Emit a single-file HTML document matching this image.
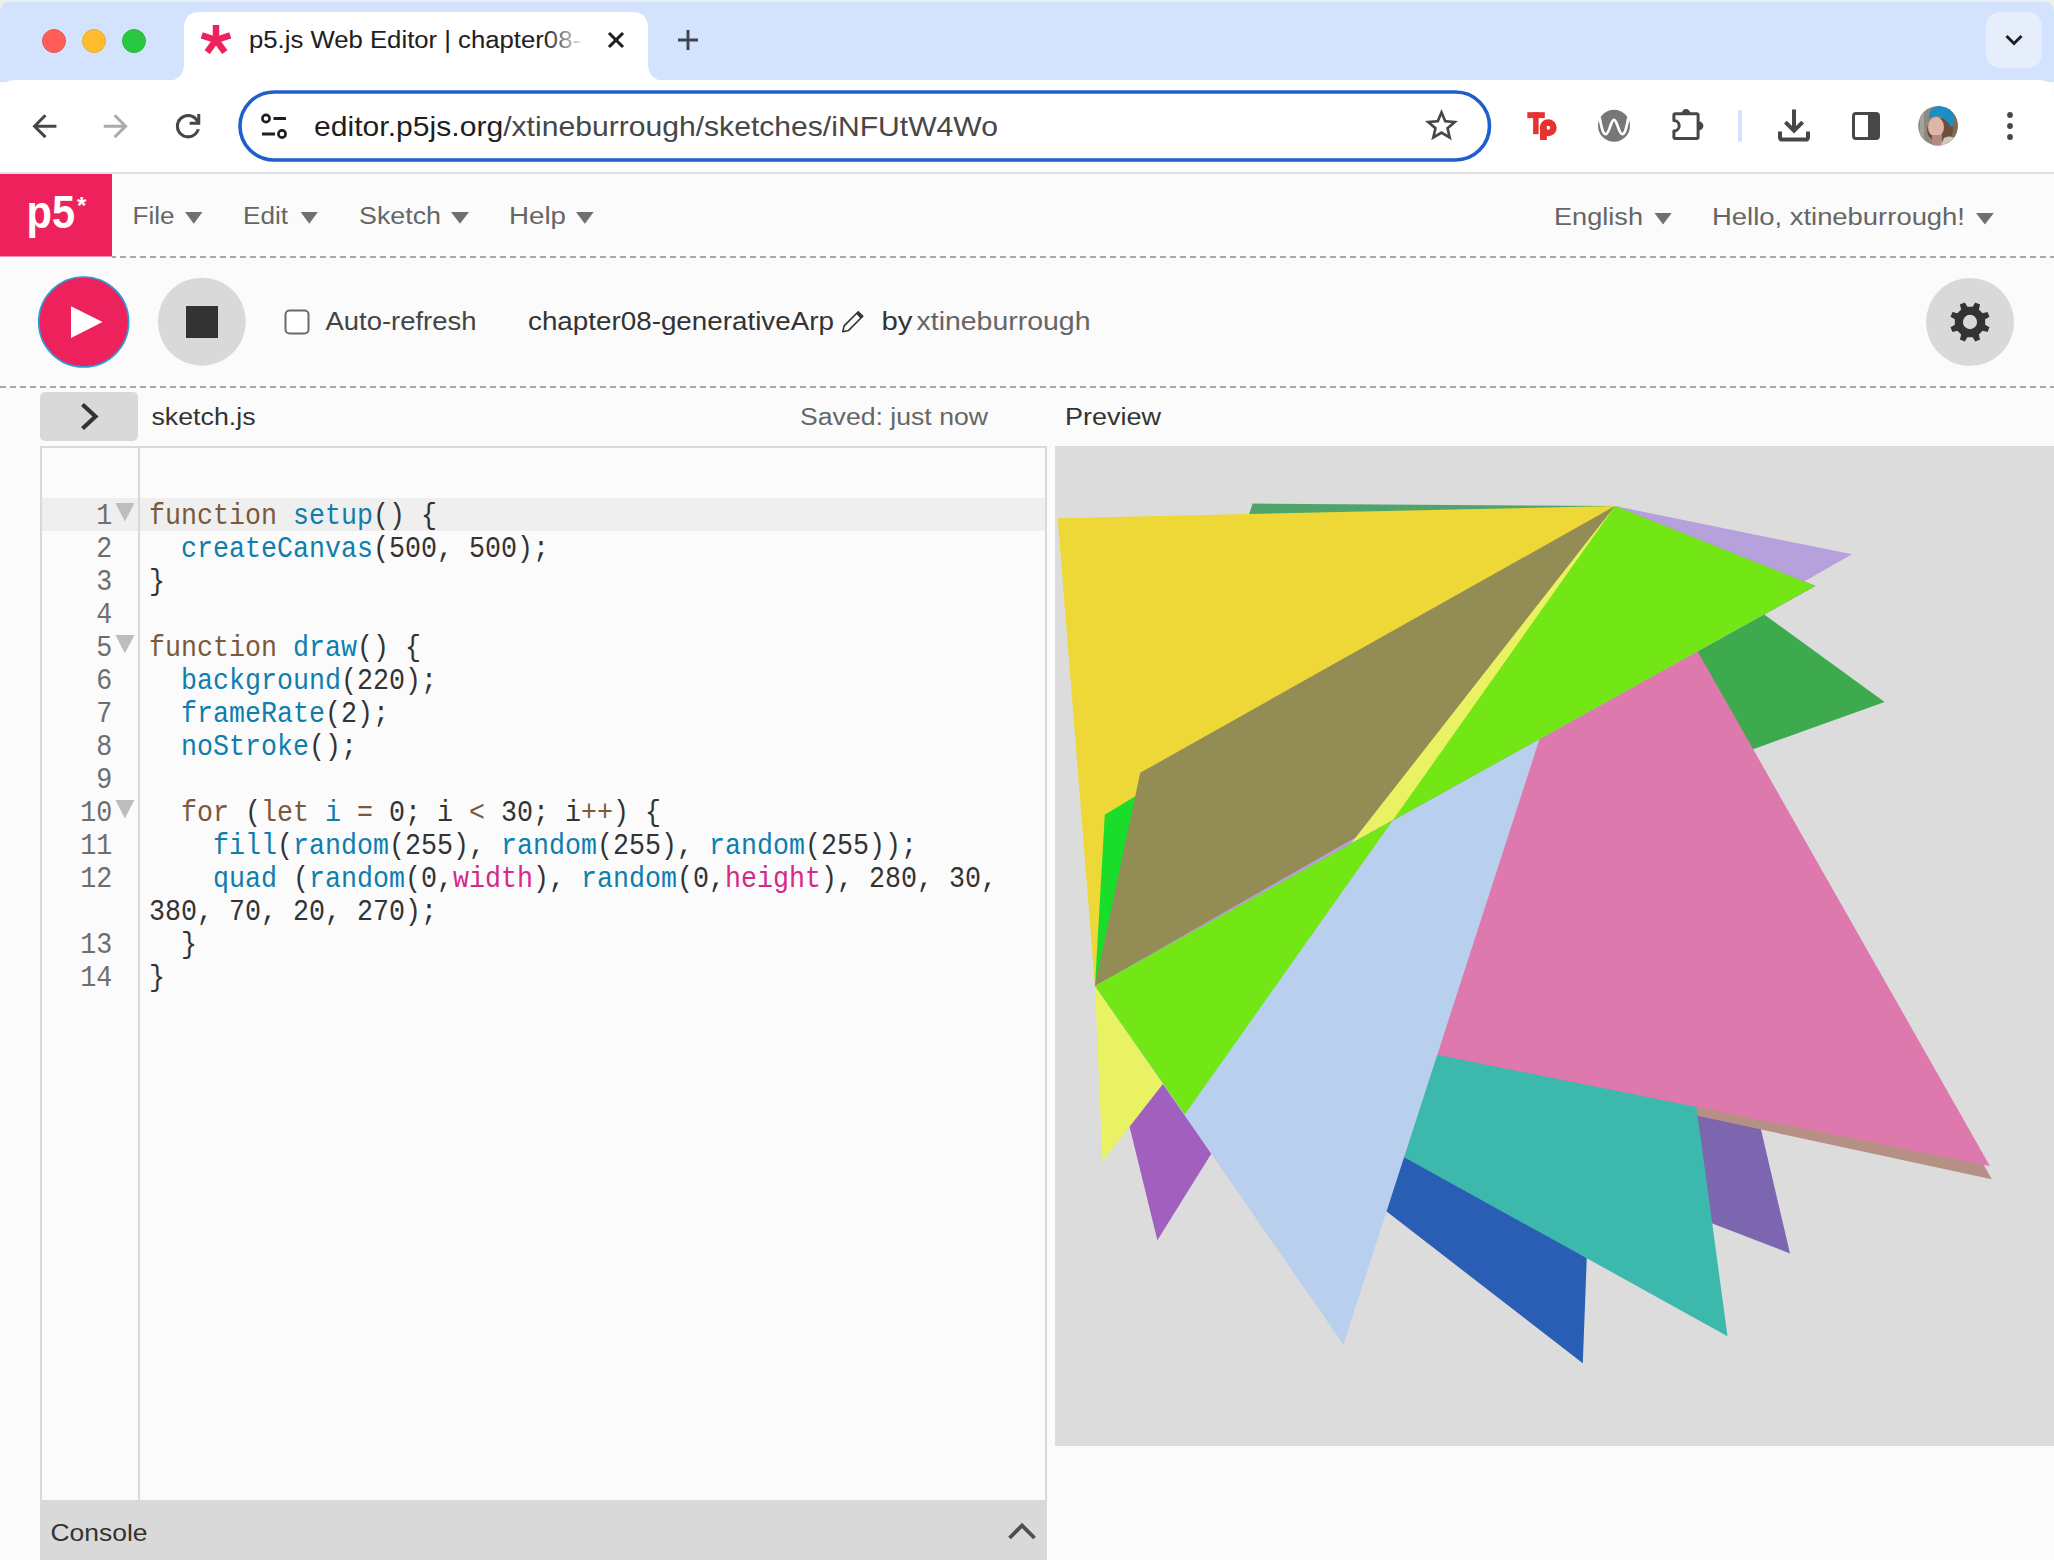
<!DOCTYPE html>
<html><head><meta charset="utf-8"><title>p5.js Web Editor</title>
<style>html,body{margin:0;padding:0;width:2054px;height:1560px;overflow:hidden;background:#FBFBFB;font-family:"Liberation Sans",sans-serif;}</style>
</head><body>
<svg width="2054" height="1560" viewBox="0 0 2054 1560" style="display:block"><rect x="0" y="0" width="2054" height="82" fill="#D3E3FD"/>
<rect x="0" y="0" width="2054" height="2" fill="#E9EEFB"/>
<path d="M0,0 L14,0 Q0,0 0,14 Z" fill="#EEF1EA"/>
<path d="M2054,0 L2040,0 Q2054,0 2054,14 Z" fill="#EEF1EA"/>
<circle cx="54" cy="41" r="11.5" fill="#FF5F57" stroke="#E2463F" stroke-width="0.8"/>
<circle cx="94" cy="41" r="11.5" fill="#FEBC2E" stroke="#E1A325" stroke-width="0.8"/>
<circle cx="134" cy="41" r="11.5" fill="#28C840" stroke="#1DAD2B" stroke-width="0.8"/>
<path d="M166,81 Q184,81 184,63 L184,28 Q184,12 200,12 L632,12 Q648,12 648,28 L648,63 Q648,81 666,81 Z" fill="#FFFFFF"/>
<g><line x1="216" y1="40" x2="216.00" y2="25.00" stroke="#ED225D" stroke-width="6.5"/><line x1="216" y1="40" x2="230.27" y2="35.36" stroke="#ED225D" stroke-width="6.5"/><line x1="216" y1="40" x2="224.82" y2="52.14" stroke="#ED225D" stroke-width="6.5"/><line x1="216" y1="40" x2="207.18" y2="52.14" stroke="#ED225D" stroke-width="6.5"/><line x1="216" y1="40" x2="201.73" y2="35.36" stroke="#ED225D" stroke-width="6.5"/></g>
<defs><linearGradient id="fade" x1="0" x2="1" y1="0" y2="0"><stop offset="0" stop-color="#1F1F1F"/><stop offset="0.89" stop-color="#1F1F1F"/><stop offset="1" stop-color="#E6E6E6"/></linearGradient></defs>
<text x="249" y="47.5" font-family="Liberation Sans" font-size="23.5" textLength="332" lengthAdjust="spacingAndGlyphs" fill="url(#fade)">p5.js Web Editor | chapter08-</text>
<path d="M609,33 L623,47 M623,33 L609,47" stroke="#1F1F1F" stroke-width="3.1" stroke-linecap="butt"/>
<path d="M678,40 L698,40 M688,30 L688,50" stroke="#3C4550" stroke-width="2.9"/>
<rect x="1986" y="12" width="56" height="56" rx="14" fill="#E6EEFB"/>
<path d="M2006.5,36 L2014,43.5 L2021.5,36" stroke="#1F1F1F" stroke-width="3" fill="none"/>
<path d="M0,96 Q0,80 16,80 L2038,80 Q2054,80 2054,96 L2054,174 L0,174 Z" fill="#FFFFFF"/>
<rect x="0" y="172" width="2054" height="2" fill="#E1E1E1"/>
<path transform="translate(26.4,144.2) scale(0.0375)" fill="#474747" d="M313-440l224 224-57 56-320-320 320-320 57 56-224 224h487v80H313Z"/>
<path transform="translate(97.7,144.2) scale(0.0375)" fill="#ABABAB" d="M647-440H160v-80h487L423-744l57-56 320 320-320 320-57-56 224-224Z"/>
<path transform="translate(169.8,144.5) scale(0.0381)" fill="#474747" d="M480-160q-134 0-227-93t-93-227q0-134 93-227t227-93q69 0 132 28.5T720-690v-110h80v280H520v-80h168q-32-56-87.5-88T480-720q-100 0-170 70t-70 170q0 100 70 170t170 70q77 0 139-44t87-116h84q-28 106-114 173t-196 67Z"/>
<rect x="240" y="92" width="1249.5" height="68" rx="34" fill="#FFFFFF" stroke="#1F5FCC" stroke-width="3.6"/>
<circle cx="266" cy="118.5" r="3.6" fill="none" stroke="#1F1F1F" stroke-width="2.6"/><path d="M273.5,118.5 L286,118.5 M262,134 L275,134" stroke="#1F1F1F" stroke-width="2.8"/><circle cx="282" cy="134" r="3.6" fill="none" stroke="#1F1F1F" stroke-width="2.6"/>
<text x="314" y="136" font-family="Liberation Sans" font-size="28" textLength="684" lengthAdjust="spacingAndGlyphs"><tspan fill="#1F1F1F">editor.p5js.org</tspan><tspan fill="#474747">/xtineburrough/sketches/iNFUtW4Wo</tspan></text>
<path transform="translate(1421.7,105.7) scale(1.65)" fill="#474747" fill-rule="evenodd" d="M22 9.24l-7.19-.62L12 2 9.19 8.63 2 9.24l5.46 4.73L5.82 21 12 17.27 18.18 21l-1.63-7.03L22 9.24zM12 15.4l-3.76 2.27 1-4.28-3.32-2.88 4.38-.38L12 6.1l1.71 4.04 4.38.38-3.32 2.88 1 4.28L12 15.4z"/>
<rect x="1527.3" y="112.2" width="17.5" height="5.9" fill="#E8322F"/><rect x="1533.1" y="112.2" width="5.5" height="22" fill="#E8322F"/><rect x="1540" y="127" width="6.8" height="13" fill="#E8322F"/><path d="M1556.7,127.8 A8.5,8.5 0 1 0 1539.7,127.8 A8.5,8.5 0 1 0 1556.7,127.8 Z M1550.2,127.8 A2,2 0 1 1 1546.2,127.8 A2,2 0 1 1 1550.2,127.8 Z" fill="#E8322F" fill-rule="evenodd"/>
<circle cx="1614" cy="125.8" r="16" fill="#777777"/>
<path d="M1599.6,117.5 C1601.6,128.5 1603.2,134.2 1605.8,134.2 C1609.2,134.2 1610.8,119.8 1614,119.8 C1617.2,119.8 1618.8,134.2 1622.2,134.2 C1624.8,134.2 1626.4,128.5 1628.4,117.5" stroke="#FFFFFF" stroke-width="2.7" fill="none"/>
<path d="M1673.9,120.5 L1673.9,115.2 Q1673.9,113.7 1675.4,113.7 L1696.6,113.7 Q1698.1,113.7 1698.1,115.2 L1698.1,136.9 Q1698.1,138.4 1696.6,138.4 L1675.4,138.4 Q1673.9,138.4 1673.9,136.9 L1673.9,131.1 A5.3,5.3 0 0 0 1673.9,120.5 Z" fill="none" stroke="#474747" stroke-width="3" stroke-linejoin="round"/><path d="M1681.6,113.5 A4.4,4.4 0 0 1 1690.4,113.5 Z" fill="#474747"/><path d="M1699,121.4 A4.4,4.4 0 0 1 1699,130.2 Z" fill="#474747"/>
<rect x="1738" y="110" width="4" height="32" rx="2" fill="#D3E3FD"/>
<path transform="translate(1770,149.6) scale(0.05)" fill="#474747" d="M480-320 280-520l56-58 104 104v-326h80v326l104-104 56 58-200 200ZM240-160q-33 0-56.5-23.5T160-240v-120h80v120h480v-120h80v120q0 33-23.5 56.5T720-160H240Z"/>
<rect x="1853.5" y="113.5" width="25" height="25" rx="2.5" fill="none" stroke="#474747" stroke-width="3"/><rect x="1868" y="113" width="11" height="26" fill="#474747"/>
<defs><clipPath id="av"><circle cx="1938" cy="125.8" r="19.8"/></clipPath></defs>
<g clip-path="url(#av)"><rect x="1918" y="106" width="40" height="40" fill="#8E897E"/><rect x="1946" y="106" width="12" height="40" fill="#7E6B55"/><rect x="1920" y="106" width="4" height="40" fill="#A6A298"/><ellipse cx="1940" cy="130" rx="13" ry="12" fill="#6E4E38"/><ellipse cx="1936" cy="127" rx="8" ry="10" fill="#DEB6A6"/><rect x="1932" y="135" width="10" height="12" fill="#B38A80"/><path d="M1940,147 L1944,138 Q1950,134 1958,140 L1958,147 Z" fill="#CFC6C0"/><path d="M1929,119 Q1928,108 1938,106 Q1950,104 1954,116 Q1955,124 1951,127 Q1946,118 1938,116 Q1932,116 1929,119 Z" fill="#1C8EC5"/></g>
<circle cx="2010" cy="115" r="2.9" fill="#474747"/>
<circle cx="2010" cy="126" r="2.9" fill="#474747"/>
<circle cx="2010" cy="137" r="2.9" fill="#474747"/>
<rect x="0" y="174" width="2054" height="1386" fill="#FBFBFB"/>
<rect x="0" y="174" width="112" height="82.5" fill="#ED225D"/>
<text x="26.5" y="228" font-family="Liberation Sans" font-size="46" font-weight="bold" fill="#FFFFFF" textLength="48.5" lengthAdjust="spacingAndGlyphs">p5</text>
<text x="77" y="214" font-family="Liberation Sans" font-size="24" fill="#FFFFFF" font-weight="bold">*</text>
<text x="132.5" y="223.7" font-family="Liberation Sans" font-size="23.5" fill="#666666" textLength="42" lengthAdjust="spacingAndGlyphs" >File</text>
<path d="M185,212 L202.5,212 L193.75,223.7 Z" fill="#707070"/>
<text x="243" y="223.7" font-family="Liberation Sans" font-size="23.5" fill="#666666" textLength="45" lengthAdjust="spacingAndGlyphs" >Edit</text>
<path d="M300.7,212 L317.8,212 L309.25,223.7 Z" fill="#707070"/>
<text x="359" y="223.7" font-family="Liberation Sans" font-size="23.5" fill="#666666" textLength="82" lengthAdjust="spacingAndGlyphs" >Sketch</text>
<path d="M451,212 L469,212 L460.0,223.7 Z" fill="#707070"/>
<text x="509" y="223.7" font-family="Liberation Sans" font-size="23.5" fill="#666666" textLength="57" lengthAdjust="spacingAndGlyphs" >Help</text>
<path d="M576,212 L593.7,212 L584.85,223.7 Z" fill="#707070"/>
<text x="1554" y="224.6" font-family="Liberation Sans" font-size="23.5" fill="#666666" textLength="89" lengthAdjust="spacingAndGlyphs" >English</text>
<path d="M1654.5,213 L1671.6,213 L1663.05,224.6 Z" fill="#707070"/>
<text x="1712" y="224.6" font-family="Liberation Sans" font-size="23.5" fill="#666666" textLength="253" lengthAdjust="spacingAndGlyphs" >Hello, xtineburrough!</text>
<path d="M1976,213 L1993.8,213 L1984.9,224.6 Z" fill="#707070"/>
<defs><pattern id="dash" x="0" y="0" width="10" height="2" patternUnits="userSpaceOnUse"><rect x="0" y="0" width="6" height="2" fill="#A8A8A8"/></pattern></defs>
<rect x="112" y="256" width="1942" height="2" fill="url(#dash)"/>
<rect x="0" y="386" width="2054" height="2" fill="url(#dash)"/>
<circle cx="83.7" cy="322" r="45" fill="#ED225D" stroke="#2C9CD8" stroke-width="1.6"/>
<path d="M71,306.3 L102.5,322 L71,338 Z" fill="#FFFFFF"/>
<circle cx="201.8" cy="321.7" r="44" fill="#D9D9D9"/>
<rect x="186" y="306" width="32" height="32" fill="#333333"/>
<rect x="285.5" y="310.5" width="23" height="23" rx="4" fill="#FFFFFF" stroke="#6B6B6B" stroke-width="2"/>
<text x="325.5" y="330.4" font-family="Liberation Sans" font-size="25.5" fill="#444444" textLength="151" lengthAdjust="spacingAndGlyphs" >Auto-refresh</text>
<text x="528" y="330.4" font-family="Liberation Sans" font-size="25.5" fill="#333333" textLength="306" lengthAdjust="spacingAndGlyphs" >chapter08-generativeArp</text>
<g transform="translate(852,322.5) rotate(45)"><path d="M-3.2,-12 L3.2,-12 L3.2,8 L0,13 L-3.2,8 Z" fill="none" stroke="#333333" stroke-width="1.6" stroke-linejoin="round"/><path d="M-3.2,-12 L3.2,-12 L3.2,-9 L-3.2,-9 Z" fill="#333333"/></g>
<text x="881.5" y="330.4" font-family="Liberation Sans" font-size="25.5" fill="#333333" textLength="31" lengthAdjust="spacingAndGlyphs" >by</text>
<text x="916.5" y="330.4" font-family="Liberation Sans" font-size="25.5" fill="#666666" textLength="174" lengthAdjust="spacingAndGlyphs" >xtineburrough</text>
<circle cx="1970" cy="322" r="44" fill="#D9D9D9"/>
<path d="M1985.17,324.65 L1989.51,327.25 L1987.50,332.08 L1982.60,330.86 L1978.86,334.60 L1980.08,339.50 L1975.25,341.51 L1972.65,337.17 L1967.35,337.17 L1964.75,341.51 L1959.92,339.50 L1961.14,334.60 L1957.40,330.86 L1952.50,332.08 L1950.49,327.25 L1954.83,324.65 L1954.83,319.35 L1950.49,316.75 L1952.50,311.92 L1957.40,313.14 L1961.14,309.40 L1959.92,304.50 L1964.75,302.49 L1967.35,306.83 L1972.65,306.83 L1975.25,302.49 L1980.08,304.50 L1978.86,309.40 L1982.60,313.14 L1987.50,311.92 L1989.51,316.75 L1985.17,319.35 Z M1977.1,322 A7.1,7.1 0 1 0 1962.9,322 A7.1,7.1 0 1 0 1977.1,322 Z" fill="#333333" fill-rule="evenodd"/>
<rect x="40" y="392" width="98" height="49" rx="5" fill="#D9D9D9"/>
<path d="M82.5,404.5 L95.5,416.5 L82.5,428.5" stroke="#333333" stroke-width="4.2" fill="none"/>
<text x="151.5" y="424.7" font-family="Liberation Sans" font-size="23.5" fill="#333333" textLength="104" lengthAdjust="spacingAndGlyphs" >sketch.js</text>
<text x="800" y="425" font-family="Liberation Sans" font-size="23.5" fill="#666666" textLength="188" lengthAdjust="spacingAndGlyphs" >Saved: just now</text>
<text x="1065" y="425" font-family="Liberation Sans" font-size="23.5" fill="#333333" textLength="96" lengthAdjust="spacingAndGlyphs" >Preview</text>
<rect x="41" y="447" width="1005" height="1060" fill="#FBFBFB" stroke="#D9D9D9" stroke-width="2"/>
<rect x="42" y="498" width="1003" height="33" fill="#EFEFEF"/>
<rect x="138" y="448" width="2" height="1052" fill="#D9D9D9"/>
<text x="96.3" y="524.5" font-family="Liberation Mono" font-size="26.66" fill="#6E6E6E" transform="translate(0,524.5) scale(1,1.14) translate(0,-524.5)">1</text>
<path d="M115.4,503.0 L134.4,503.0 L124.9,521.5 Z" fill="#BDBDBD"/>
<text x="149" y="524.5" font-family="Liberation Mono" font-size="26.66" xml:space="preserve" textLength="288.0" lengthAdjust="spacing" transform="translate(0,524.5) scale(1,1.12) translate(0,-524.5)"><tspan fill="#7A5A3C">function</tspan><tspan fill="#333333"> </tspan><tspan fill="#0E7EAE">setup</tspan><tspan fill="#333333">() {</tspan></text>
<text x="96.3" y="557.5" font-family="Liberation Mono" font-size="26.66" fill="#6E6E6E" transform="translate(0,557.5) scale(1,1.14) translate(0,-557.5)">2</text>
<text x="149" y="557.5" font-family="Liberation Mono" font-size="26.66" xml:space="preserve" textLength="400.0" lengthAdjust="spacing" transform="translate(0,557.5) scale(1,1.12) translate(0,-557.5)"><tspan fill="#333333">  </tspan><tspan fill="#0E7EAE">createCanvas</tspan><tspan fill="#333333">(500, 500);</tspan></text>
<text x="96.3" y="590.5" font-family="Liberation Mono" font-size="26.66" fill="#6E6E6E" transform="translate(0,590.5) scale(1,1.14) translate(0,-590.5)">3</text>
<text x="149" y="590.5" font-family="Liberation Mono" font-size="26.66" xml:space="preserve" textLength="16.0" lengthAdjust="spacing" transform="translate(0,590.5) scale(1,1.12) translate(0,-590.5)"><tspan fill="#333333">}</tspan></text>
<text x="96.3" y="623.5" font-family="Liberation Mono" font-size="26.66" fill="#6E6E6E" transform="translate(0,623.5) scale(1,1.14) translate(0,-623.5)">4</text>
<text x="96.3" y="656.5" font-family="Liberation Mono" font-size="26.66" fill="#6E6E6E" transform="translate(0,656.5) scale(1,1.14) translate(0,-656.5)">5</text>
<path d="M115.4,635.0 L134.4,635.0 L124.9,653.5 Z" fill="#BDBDBD"/>
<text x="149" y="656.5" font-family="Liberation Mono" font-size="26.66" xml:space="preserve" textLength="272.0" lengthAdjust="spacing" transform="translate(0,656.5) scale(1,1.12) translate(0,-656.5)"><tspan fill="#7A5A3C">function</tspan><tspan fill="#333333"> </tspan><tspan fill="#0E7EAE">draw</tspan><tspan fill="#333333">() {</tspan></text>
<text x="96.3" y="689.5" font-family="Liberation Mono" font-size="26.66" fill="#6E6E6E" transform="translate(0,689.5) scale(1,1.14) translate(0,-689.5)">6</text>
<text x="149" y="689.5" font-family="Liberation Mono" font-size="26.66" xml:space="preserve" textLength="288.0" lengthAdjust="spacing" transform="translate(0,689.5) scale(1,1.12) translate(0,-689.5)"><tspan fill="#333333">  </tspan><tspan fill="#0E7EAE">background</tspan><tspan fill="#333333">(220);</tspan></text>
<text x="96.3" y="722.5" font-family="Liberation Mono" font-size="26.66" fill="#6E6E6E" transform="translate(0,722.5) scale(1,1.14) translate(0,-722.5)">7</text>
<text x="149" y="722.5" font-family="Liberation Mono" font-size="26.66" xml:space="preserve" textLength="240.0" lengthAdjust="spacing" transform="translate(0,722.5) scale(1,1.12) translate(0,-722.5)"><tspan fill="#333333">  </tspan><tspan fill="#0E7EAE">frameRate</tspan><tspan fill="#333333">(2);</tspan></text>
<text x="96.3" y="755.5" font-family="Liberation Mono" font-size="26.66" fill="#6E6E6E" transform="translate(0,755.5) scale(1,1.14) translate(0,-755.5)">8</text>
<text x="149" y="755.5" font-family="Liberation Mono" font-size="26.66" xml:space="preserve" textLength="208.0" lengthAdjust="spacing" transform="translate(0,755.5) scale(1,1.12) translate(0,-755.5)"><tspan fill="#333333">  </tspan><tspan fill="#0E7EAE">noStroke</tspan><tspan fill="#333333">();</tspan></text>
<text x="96.3" y="788.5" font-family="Liberation Mono" font-size="26.66" fill="#6E6E6E" transform="translate(0,788.5) scale(1,1.14) translate(0,-788.5)">9</text>
<text x="80.3" y="821.5" font-family="Liberation Mono" font-size="26.66" fill="#6E6E6E" transform="translate(0,821.5) scale(1,1.14) translate(0,-821.5)">10</text>
<path d="M115.4,800.0 L134.4,800.0 L124.9,818.5 Z" fill="#BDBDBD"/>
<text x="149" y="821.5" font-family="Liberation Mono" font-size="26.66" xml:space="preserve" textLength="512.0" lengthAdjust="spacing" transform="translate(0,821.5) scale(1,1.12) translate(0,-821.5)"><tspan fill="#333333">  </tspan><tspan fill="#7A5A3C">for</tspan><tspan fill="#333333"> (</tspan><tspan fill="#7A5A3C">let</tspan><tspan fill="#333333"> </tspan><tspan fill="#0E7EAE">i</tspan><tspan fill="#333333"> </tspan><tspan fill="#7A5A3C">=</tspan><tspan fill="#333333"> 0; i </tspan><tspan fill="#7A5A3C">&lt;</tspan><tspan fill="#333333"> 30; i</tspan><tspan fill="#7A5A3C">++</tspan><tspan fill="#333333">) {</tspan></text>
<text x="80.3" y="854.5" font-family="Liberation Mono" font-size="26.66" fill="#6E6E6E" transform="translate(0,854.5) scale(1,1.14) translate(0,-854.5)">11</text>
<text x="149" y="854.5" font-family="Liberation Mono" font-size="26.66" xml:space="preserve" textLength="768.0" lengthAdjust="spacing" transform="translate(0,854.5) scale(1,1.12) translate(0,-854.5)"><tspan fill="#333333">    </tspan><tspan fill="#0E7EAE">fill</tspan><tspan fill="#333333">(</tspan><tspan fill="#0E7EAE">random</tspan><tspan fill="#333333">(255), </tspan><tspan fill="#0E7EAE">random</tspan><tspan fill="#333333">(255), </tspan><tspan fill="#0E7EAE">random</tspan><tspan fill="#333333">(255));</tspan></text>
<text x="80.3" y="887.5" font-family="Liberation Mono" font-size="26.66" fill="#6E6E6E" transform="translate(0,887.5) scale(1,1.14) translate(0,-887.5)">12</text>
<text x="149" y="887.5" font-family="Liberation Mono" font-size="26.66" xml:space="preserve" textLength="848.0" lengthAdjust="spacing" transform="translate(0,887.5) scale(1,1.12) translate(0,-887.5)"><tspan fill="#333333">    </tspan><tspan fill="#0E7EAE">quad</tspan><tspan fill="#333333"> (</tspan><tspan fill="#0E7EAE">random</tspan><tspan fill="#333333">(0,</tspan><tspan fill="#D52889">width</tspan><tspan fill="#333333">), </tspan><tspan fill="#0E7EAE">random</tspan><tspan fill="#333333">(0,</tspan><tspan fill="#D52889">height</tspan><tspan fill="#333333">), 280, 30,</tspan></text>
<text x="149" y="920.5" font-family="Liberation Mono" font-size="26.66" xml:space="preserve" textLength="288.0" lengthAdjust="spacing" transform="translate(0,920.5) scale(1,1.12) translate(0,-920.5)"><tspan fill="#333333">380, 70, 20, 270);</tspan></text>
<text x="80.3" y="953.5" font-family="Liberation Mono" font-size="26.66" fill="#6E6E6E" transform="translate(0,953.5) scale(1,1.14) translate(0,-953.5)">13</text>
<text x="149" y="953.5" font-family="Liberation Mono" font-size="26.66" xml:space="preserve" textLength="48.0" lengthAdjust="spacing" transform="translate(0,953.5) scale(1,1.12) translate(0,-953.5)"><tspan fill="#333333">  }</tspan></text>
<text x="80.3" y="986.5" font-family="Liberation Mono" font-size="26.66" fill="#6E6E6E" transform="translate(0,986.5) scale(1,1.14) translate(0,-986.5)">14</text>
<text x="149" y="986.5" font-family="Liberation Mono" font-size="26.66" xml:space="preserve" textLength="16.0" lengthAdjust="spacing" transform="translate(0,986.5) scale(1,1.12) translate(0,-986.5)"><tspan fill="#333333">}</tspan></text>
<rect x="40" y="1500" width="1007" height="60" fill="#D9D9D9"/>
<text x="50.5" y="1541" font-family="Liberation Sans" font-size="24" fill="#333333" textLength="97" lengthAdjust="spacingAndGlyphs" >Console</text>
<path d="M1009.5,1538 L1022,1525.5 L1034.5,1538" stroke="#4D4D4D" stroke-width="3.8" fill="none"/>
<svg x="1055" y="446" width="1000" height="1000" viewBox="0 0 500 500">
<rect x="0" y="0" width="500" height="500" fill="#DCDCDC"/>
<path d="M98.8,28.8 L280,30 L380,70 L20,270 Z" fill="#4FA46B" fill-rule="nonzero"/>
<path d="M1.35,36.1 L280,30 L380,70 L20,270 Z" fill="#EDD838" fill-rule="nonzero"/>
<path d="M24.9,184.4 L280,30 L380,70 L20,270 Z" fill="#1ADC2B" fill-rule="nonzero"/>
<path d="M42.6,163.4 L280,30 L380,70 L20,270 Z" fill="#948C55" fill-rule="nonzero"/>
<path d="M398.5,54.15 L280,30 L380,70 L20,270 Z" fill="#B7A1DC" fill-rule="nonzero"/>
<path d="M51.2,397.1 L280,30 L380,70 L20,270 Z" fill="#A160BE" fill-rule="nonzero"/>
<path d="M23.75,357.6 L280,30 L380,70 L20,270 Z" fill="#E8F262" fill-rule="nonzero"/>
<path d="M263.9,458.6 L280,30 L380,70 L20,270 Z" fill="#2A5DB4" fill-rule="nonzero"/>
<path d="M367.5,403.7 L280,30 L380,70 L20,270 Z" fill="#7B66AF" fill-rule="nonzero"/>
<path d="M468.4,366.6 L280,30 L380,70 L20,270 Z" fill="#B68F85" fill-rule="nonzero"/>
<path d="M336.25,445.1 L280,30 L380,70 L20,270 Z" fill="#3DB8AD" fill-rule="nonzero"/>
<path d="M414.8,128 L280,30 L380,70 L20,270 Z" fill="#3DAA4D" fill-rule="nonzero"/>
<path d="M467.45,359.95 L280,30 L380,70 L20,270 Z" fill="#DE79AE" fill-rule="nonzero"/>
<path d="M144.2,449.3 L280,30 L380,70 L20,270 Z" fill="#B9CFEE" fill-rule="nonzero"/>
<path d="M64.9,334.3 L280,30 L380,70 L20,270 Z" fill="#73E616" fill-rule="nonzero"/>
</svg></svg>
</body></html>
